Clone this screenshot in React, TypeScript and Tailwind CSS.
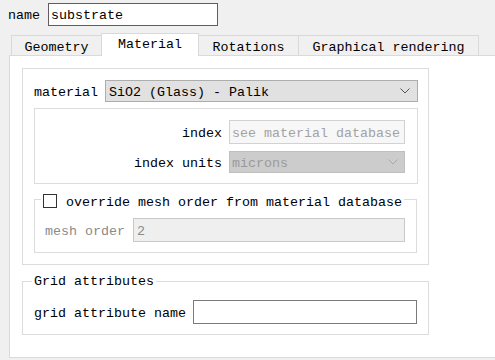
import React from "react";

const font = { fontFamily: '"Liberation Mono", "DejaVu Sans Mono", monospace' };

function Chevron({ color }: { color: string }) {
  return (
    <svg width="10" height="6" viewBox="0 0 10 6" className="shrink-0">
      <path d="M0.5 0.5 L5 5 L9.5 0.5" fill="none" stroke={color} strokeWidth="1" />
    </svg>
  );
}

export default function App() {
  return (
    <div
      className="w-[495px] h-[360px] bg-[#f0f0f0] overflow-hidden text-[13.33px] text-black leading-none"
      style={font}
    >
      {/* Name row */}
      <div className="flex items-center pt-[3px] pl-[8px]">
        <span className="w-[40px] pt-[3px]">name</span>
        <div className="w-[170px] h-[23px] bg-white border border-[#5e5e5e] flex items-center pl-[2px] pt-[3px]">
          substrate
        </div>
      </div>

      {/* Tabs */}
      <div className="flex items-end mt-[7px] pl-[11px] h-[22px] relative z-10">
        <div className="w-[90px] h-[20px] border-l border-t border-[#d9d9d9] flex items-center justify-center pt-[4px]">
          Geometry
        </div>
        <div className="w-[98px] h-[23px] -mb-px bg-white border-l border-t border-r border-[#d9d9d9] flex items-center justify-center">
          Material
        </div>
        <div className="w-[100px] h-[20px] border-t border-r border-[#d9d9d9] flex items-center justify-center pt-[4px]">
          Rotations
        </div>
        <div className="w-[180px] h-[20px] border-t border-r border-[#d9d9d9] flex items-center justify-center pt-[4px]">
          Graphical rendering
        </div>
      </div>

      {/* Panel */}
      <div className="ml-[9px] w-[500px] h-[303px] bg-white border border-[#dadada]">
        {/* Material group */}
        <div className="ml-[12px] mt-[12px] w-[407px] h-[197px] border border-[#dcdcdc]">
          <div className="flex items-center mt-[11px] pl-[11px]">
            <span className="w-[71px] pt-[4px]">material</span>
            <div className="w-[313px] h-[22px] bg-[#e1e1e1] border border-[#adadad] flex items-center justify-between pl-[3px] pr-[7px]">
              <span className="pt-[4px]">SiO2 (Glass) - Palik</span>
              <Chevron color="#555555" />
            </div>
          </div>

          <div className="ml-[11px] mt-[6px] w-[384px] h-[76px] border border-[#dcdcdc]">
            <div className="flex items-center mt-[11px]">
              <span className="w-[187px] text-right pt-[4px]">index</span>
              <div className="ml-[7px] w-[176px] h-[24px] bg-[#f7f7f7] border border-[#d2d2d2] flex items-center pl-[2px] pt-[4px] text-[#a3a3a3]">
                see material database
              </div>
            </div>
            <div className="flex items-center mt-[7px]">
              <span className="w-[187px] text-right pt-[4px]">index units</span>
              <div className="ml-[7px] w-[176px] h-[22px] bg-[#cccccc] border border-[#c0c0c0] flex items-center justify-between pl-[2px] pr-[6px] text-[#9a9a9a]">
                <span className="pt-[4px]">microns</span>
                <Chevron color="#a9a9a9" />
              </div>
            </div>
          </div>

          {/* Override group */}
          <div className="relative ml-[11px] mt-[15px] w-[383px] h-[54px] border border-[#dcdcdc]">
            <div className="absolute left-[6px] top-[-8px] flex items-center bg-white px-[2px]">
              <div className="w-[14px] h-[14px] border border-[#333333] bg-white" />
              <span className="ml-[9px] pt-[4px]">override mesh order from material database</span>
            </div>
            <div className="flex items-center mt-[18px] pl-[10px]">
              <span className="w-[88px] pt-[4px] text-[#8a8a8a]">mesh order</span>
              <div className="w-[272px] h-[24px] bg-[#efefef] border border-[#c9c9c9] flex items-center pl-[3px] pt-[4px] text-[#8a8a8a]">
                2
              </div>
            </div>
          </div>
        </div>

        {/* Grid attributes group */}
        <div className="relative ml-[12px] mt-[16px] w-[407px] h-[54px] border border-[#dcdcdc]">
          <span className="absolute left-[9px] top-[-7px] bg-white px-[2px]">Grid attributes</span>
          <div className="flex items-center mt-[18px] pl-[11px]">
            <span className="w-[159px] pt-[4px]">grid attribute name</span>
            <div className="w-[224px] h-[24px] bg-white border border-[#7a7a7a]" />
          </div>
        </div>
      </div>
    </div>
  );
}
